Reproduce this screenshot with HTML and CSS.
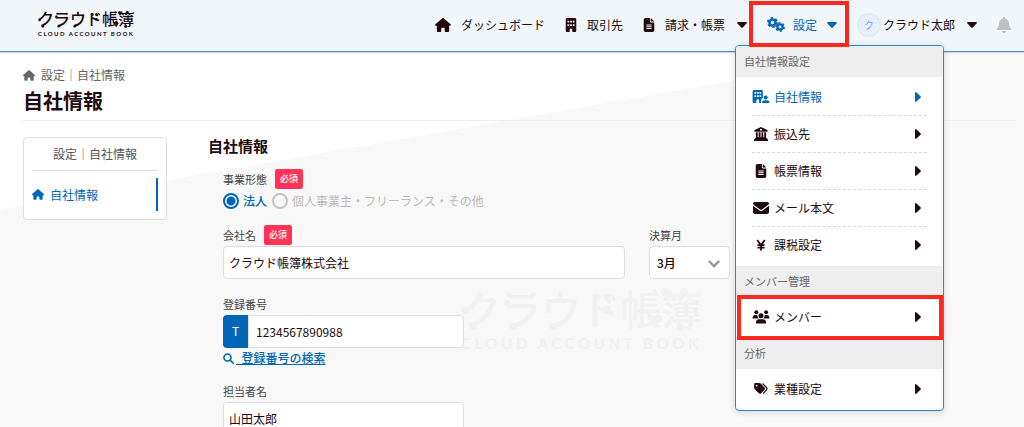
FILE: index.html
```html
<!DOCTYPE html>
<html lang="ja">
<head>
<meta charset="utf-8">
<title>自社情報</title>
<link rel="stylesheet" href="styles.css">
</head>
<body>
<svg class="sprite" aria-hidden="true">
  <symbol id="i-home" viewBox="0 0 576 512"><path d="M575.8 255.5c0 18-15 32.1-32 32.1h-32l.7 160.2c0 2.7-.2 5.4-.5 8.1V472c0 22.1-17.9 40-40 40H392c-22.1 0-40-17.9-40-40V384c0-17.7-14.3-32-32-32H256c-17.7 0-32 14.3-32 32v88c0 22.1-17.9 40-40 40H104c-22.1 0-40-17.9-40-40V287.6H32c-18 0-32-14-32-32.1c0-9 3-17 10-24L266.4 8c7-7 15-8 22-8s15 2 21 7L564.8 231.5c8 7 12 15 11 24z"/></symbol>
  <symbol id="i-building" viewBox="0 0 384 512"><path fill-rule="evenodd" d="M48 0C21.500 0 0 21.500 0 48V464c0 26.500 21.500 48 48 48h96V432c0-26.500 21.500-48 48-48s48 21.500 48 48v80h96c26.500 0 48-21.500 48-48V48c0-26.500-21.500-48-48-48ZM64 96h64v64H64ZM160 96h64v64h-64ZM256 96h64v64h-64ZM64 224h64v64H64ZM160 224h64v64h-64ZM256 224h64v64h-64Z"/></symbol>
  <symbol id="i-file" viewBox="0 0 384 512"><path fill-rule="evenodd" d="M64 0C28.700 0 0 28.700 0 64V448c0 35.300 28.700 64 64 64H320c35.300 0 64-28.700 64-64V160H256c-17.700 0-32-14.300-32-32V0ZM256 0V128H384ZM96 240H288v32H96ZM96 304H288v32H96ZM96 368H288v32H96Z"/></symbol>
  <symbol id="i-caret" viewBox="0 0 10 6"><path d="M1 0H9Q10.500 .3 9.500 1.500L6 5.300Q5 6.300 4 5.300L.5 1.500Q-.5 .3 1 0Z"/></symbol>
  <symbol id="i-arrow" viewBox="0 0 6 10"><path d="M0 1Q.3-.5 1.500 .5L5.300 4Q6.300 5 5.300 6L1.500 9.500Q.3 10.500 0 9Z"/></symbol>
  <symbol id="i-gears" viewBox="0 0 18 15">
    <g fill="none" stroke="currentColor"><circle cx="5.500" cy="5.500" r="3" stroke-width="2.600"/><circle cx="5.500" cy="5.500" r="4.600" stroke-width="1.800" stroke-dasharray="2.400 2.417"/>
    <circle cx="13" cy="10" r="2.600" stroke-width="2.300"/><circle cx="13" cy="10" r="4.100" stroke-width="1.600" stroke-dasharray="2.100 2.194"/></g>
  </symbol>
  <symbol id="i-bell" viewBox="0 0 448 512"><path d="M224 0c-17.700 0-32 14.300-32 32V51.200C119 66 64 130.600 64 208v18.800c0 47-17.300 92.400-48.500 127.600l-7.400 8.300c-8.400 9.400-10.400 22.900-5.300 34.400S19.400 416 32 416H416c12.600 0 24-7.400 29.200-18.900s3.100-25-5.300-34.400l-7.400-8.300C401.300 319.200 384 273.900 384 226.800V208c0-77.400-55-142-128-156.800V32c0-17.700-14.300-32-32-32ZM288 448H160c0 35 29 64 64 64s64-29 64-64Z"/></symbol>
  <symbol id="i-company" viewBox="0 0 18 15"><path fill-rule="evenodd" d="M1.500 0H9.500Q11 0 11 1.500V8.500Q9 9.500 9 11V14H7V11.500Q7 10 5.500 10T4 11.500V14H1.500Q0 14 0 12.500V1.500Q0 0 1.500 0ZM2 2.200V4H3.800V2.200ZM4.700 2.200V4H6.500V2.200ZM7.400 2.200V4H9.200V2.200ZM2 5.700V7.500H3.800V5.700ZM4.700 5.700V7.500H6.500V5.700ZM7.400 5.700V7.500H9.200V5.700Z"/><circle cx="14" cy="8" r="2.200"/><path d="M10 14Q10 11 12.500 11H15.500Q18 11 18 14Z"/></symbol>
  <symbol id="i-bank" viewBox="0 0 16 15"><path fill-rule="evenodd" d="M8 0 15 3.300V5H1V3.300ZM8 1.800A1.100 1.100 0 1 0 8 4A1.100 1.100 0 1 0 8 1.800ZM2.500 5.500h2V11h1V5.500h2V11h1V5.500h2V11h1V5.500h2V11.500L15.500 13.500V15H.5V13.500L2.500 11.500Z"/></symbol>
  <symbol id="i-mail" viewBox="0 0 16 12"><path d="M1.500 0H14.500Q16 0 16 1.500 16 2.200 15.300 2.800L9 7.500Q8 8.200 7 7.500L.7 2.800Q0 2.200 0 1.500 0 0 1.500 0Z"/><path d="M0 3.800 6.500 8.600Q8 9.700 9.500 8.600L16 3.800V10Q16 12 14 12H2Q0 12 0 10Z"/></symbol>
  <symbol id="i-yen" viewBox="0 0 10 12"><path d="M1.200 1 5 6.300 8.800 1M5 6V11.500M1.500 6.200H8.500M1.500 8.700H8.500" fill="none" stroke="currentColor" stroke-width="1.800"/></symbol>
  <symbol id="i-users" viewBox="0 0 18 15"><circle cx="4" cy="2.400" r="2.100"/><circle cx="14.500" cy="2.400" r="2.100"/><circle cx="9" cy="6.200" r="2.700"/><path d="M0 9Q0 5.300 3 5.300H5Q5 8 6.500 9ZM18 9Q18 5.300 15 5.300H13Q13 8 11.500 9ZM3.500 14.500Q3.500 10 7 10H11Q14.500 10 14.500 14.500Z"/></symbol>
  <symbol id="i-tags" viewBox="0 0 16 14"><path fill-rule="evenodd" d="M0 1.500Q0 0 1.500 0H6Q7 0 7.700 .7L12.300 5.500Q13.300 6.600 12.300 7.700L8 12.300Q7 13.300 5.900 12.300L.7 7.200Q0 6.500 0 5.500ZM3 1.900A1.100 1.100 0 1 0 3 4.100A1.100 1.100 0 1 0 3 1.900Z"/><path d="M9.800 .6 14.600 5.500Q15.700 6.700 14.600 7.900L10.500 12.300" fill="none" stroke="currentColor" stroke-width="1.400"/></symbol>
  <symbol id="i-search" viewBox="0 0 12 12"><path d="M8 8 11.200 11.200M8.800 4.900A3.900 3.900 0 1 1 1 4.900A3.900 3.900 0 1 1 8.800 4.900Z" fill="none" stroke="currentColor" stroke-width="1.700" stroke-linecap="round"/></symbol>
  <symbol id="i-chevron" viewBox="0 0 12 8"><path d="M1.500 1.500 6 6.200 10.500 1.500" fill="none" stroke="currentColor" stroke-width="2.400" stroke-linecap="round"/></symbol>
  <symbol id="i-nodes" viewBox="0 0 240 44"><circle cx="4" cy="22" r="3.500"/><circle cx="12" cy="38" r="3.500"/><circle cx="46" cy="15" r="3.500"/><circle cx="48" cy="7" r="2.500"/><circle cx="72" cy="7" r="2.500"/><circle cx="52" cy="38" r="3.500"/><circle cx="92" cy="38" r="3.500"/><circle cx="136" cy="9" r="3.500"/><circle cx="146" cy="9" r="3.500"/><circle cx="146" cy="21" r="3.500"/><circle cx="194" cy="4" r="2.500"/><circle cx="204" cy="4" r="4"/><circle cx="223" cy="4" r="4"/><circle cx="197" cy="31" r="4"/><circle cx="219" cy="39" r="3.500"/><circle cx="238" cy="5" r="2"/></symbol>
</svg>

<header class="header">
  <a class="wordmark" href="#"><span class="wordmark-main">クラウド帳簿</span><span class="wordmark-sub">CLOUD ACCOUNT BOOK</span><svg class="wordmark-nodes"><use href="#i-nodes"/></svg></a>
  <nav class="nav">
    <a class="nav-item" href="#"><svg class="icon-home"><use href="#i-home"/></svg>ダッシュボード</a>
    <a class="nav-item" href="#"><svg class="icon-tall"><use href="#i-building"/></svg>取引先</a>
    <button class="nav-item" type="button"><svg class="icon-tall"><use href="#i-file"/></svg>請求・帳票<svg class="caret"><use href="#i-caret"/></svg></button>
    <div class="nav-group">
      <button class="nav-item nav-active" type="button"><svg class="icon-gears"><use href="#i-gears"/></svg>設定<svg class="caret"><use href="#i-caret"/></svg></button>
      <div class="menu">
        <h2 class="menu-head">自社情報設定</h2>
        <ul class="menu-list">
          <li><a class="menu-item menu-current" href="#"><svg class="icon-wide"><use href="#i-company"/></svg><span>自社情報</span><svg class="arrow"><use href="#i-arrow"/></svg></a></li>
          <li><a class="menu-item" href="#"><svg class="icon-wide"><use href="#i-bank"/></svg><span>振込先</span><svg class="arrow"><use href="#i-arrow"/></svg></a></li>
          <li><a class="menu-item" href="#"><svg class="icon-wide"><use href="#i-file"/></svg><span>帳票情報</span><svg class="arrow"><use href="#i-arrow"/></svg></a></li>
          <li><a class="menu-item" href="#"><svg class="icon-wide icon-low"><use href="#i-mail"/></svg><span>メール本文</span><svg class="arrow"><use href="#i-arrow"/></svg></a></li>
          <li><a class="menu-item" href="#"><svg class="icon-wide icon-low"><use href="#i-yen"/></svg><span>課税設定</span><svg class="arrow"><use href="#i-arrow"/></svg></a></li>
        </ul>
        <h2 class="menu-head">メンバー管理</h2>
        <ul class="menu-list menu-marked">
          <li><a class="menu-item" href="#"><svg class="icon-wide"><use href="#i-users"/></svg><span>メンバー</span><svg class="arrow"><use href="#i-arrow"/></svg></a></li>
        </ul>
        <h2 class="menu-head">分析</h2>
        <ul class="menu-list">
          <li><a class="menu-item" href="#"><svg class="icon-wide icon-low"><use href="#i-tags"/></svg><span>業種設定</span><svg class="arrow"><use href="#i-arrow"/></svg></a></li>
        </ul>
      </div>
    </div>
    <button class="nav-item nav-user" type="button"><span class="avatar">ク</span>クラウド太郎<svg class="caret"><use href="#i-caret"/></svg></button>
    <button class="nav-item nav-bell" type="button" aria-label="通知"><svg class="icon-bell"><use href="#i-bell"/></svg></button>
  </nav>
</header>

<main class="main">
  <div class="page-head">
    <a class="crumb" href="#"><svg class="icon-small"><use href="#i-home"/></svg>設定｜自社情報</a>
    <h1 class="page-title">自社情報</h1>
  </div>
  <div class="columns">
    <aside class="side">
      <p class="side-title">設定｜自社情報</p>
      <a class="side-link" href="#"><svg class="icon-small"><use href="#i-home"/></svg>自社情報</a>
    </aside>
    <section class="content">
      <div class="wordmark watermark" aria-hidden="true"><span class="wordmark-main">クラウド帳簿</span><span class="wordmark-sub">CLOUD ACCOUNT BOOK</span><svg class="wordmark-nodes"><use href="#i-nodes"/></svg></div>
      <h2 class="section-title">自社情報</h2>
      <form class="form">
        <fieldset class="field">
          <legend class="label">事業形態<span class="badge">必須</span></legend>
          <div class="radios">
            <label class="radio"><input type="radio" name="kind" checked>法人</label>
            <label class="radio radio-off"><input type="radio" name="kind" disabled>個人事業主・フリーランス・その他</label>
          </div>
        </fieldset>
        <div class="row">
          <div class="field field-long">
            <label class="label" for="company">会社名<span class="badge">必須</span></label>
            <input class="input" id="company" type="text" value="クラウド帳簿株式会社">
          </div>
          <div class="field">
            <label class="label" for="month">決算月</label>
            <div class="select-wrap"><select class="input select" id="month"><option>3月</option></select><svg class="chevron"><use href="#i-chevron"/></svg></div>
          </div>
        </div>
        <div class="field field-mid">
          <label class="label" for="number">登録番号</label>
          <div class="prefixed"><span class="prefix">T</span><input class="input" id="number" type="text" value="1234567890988"></div>
          <a class="search-link" href="#"><svg class="icon-search"><use href="#i-search"/></svg><span class="search-text">&nbsp;&nbsp;登録番号の検索</span></a>
        </div>
        <div class="field field-mid">
          <label class="label" for="person">担当者名</label>
          <input class="input" id="person" type="text" value="山田太郎">
        </div>
      </form>
    </section>
  </div>
</main>
</body>
</html>
```
FILE: styles.css
```css
* { box-sizing: border-box; margin: 0; padding: 0; }
body {
  height: 100vh;
  overflow: hidden;
  display: flex;
  flex-direction: column;
  font: 12px/18px "Noto Sans CJK JP", sans-serif;
  color: #200a0e;
  background: #f8f8f8;
}
a { color: inherit; text-decoration: none; }
button, input, select { font: inherit; color: inherit; border: 0; background: none; }
svg { fill: currentColor; flex: none; display: block; }
ul { list-style: none; }
.sprite { position: absolute; width: 0; height: 0; }

.header {
  position: relative;
  z-index: 2;
  flex: none;
  display: flex;
  align-items: center;
  justify-content: space-between;
  height: 52px;
  padding: 0 13px 2px 38px;
  background: #f1f6fa;
  border-bottom: 1px solid #4a94d0;
  box-shadow: 0 1px 1px #c3dcef;
}
.wordmark { position: relative; display: flex; flex-direction: column; font-size: 16px; }
.wordmark-main {
  padding-top: 0.08em;
  font-family: "Liberation Sans", "Noto Sans CJK JP", sans-serif;
  font-weight: 500;
  line-height: 1.02em;
  white-space: nowrap;
}
.wordmark-sub {
  font-family: Lato, sans-serif;
  font-size: 0.375em;
  font-weight: 700;
  line-height: 1.5em;
  letter-spacing: 0.24em;
  white-space: nowrap;
}
.wordmark-nodes { position: absolute; left: 0; top: 0; width: 6em; height: 1.1em; }
.watermark {
  position: absolute;
  left: 253px;
  top: 151px;
  z-index: -1;
  font-size: 40px;
  color: #f0f0f0;
}

.nav { display: flex; align-items: center; gap: 20px; }
.nav-item { display: flex; align-items: center; gap: 10px; height: 48px; white-space: nowrap; }
.nav-active { gap: 8px; color: #0067b8; }
.nav-user { gap: 2px; }
.nav-bell { color: #bfbfbf; }
.nav-group { position: relative; }
.nav-group::after {
  content: "";
  position: absolute;
  inset: 0 -12px 2px -18px;
  z-index: 2;
  border: 4px solid #ff2620;
}
.icon-home { width: 16px; height: 14px; }
.icon-tall { width: 12px; height: 14px; }
.icon-gears { width: 18px; height: 15px; }
.icon-bell { width: 14px; height: 16px; }
.icon-small { width: 12px; height: 11px; }
.icon-wide { width: 18px; height: 14px; }
.icon-low { height: 12px; }
.icon-search { width: 11px; height: 11px; }
.caret { width: 10px; height: 6px; margin-left: 2px; }
.nav-user .caret { margin-left: 10px; }
.avatar {
  width: 24px;
  height: 24px;
  border: 1px solid #d9e4f2;
  border-radius: 50%;
  background: #e6f0fd;
  color: #7ea4ee;
  font-size: 10px;
  line-height: 22px;
}

.menu {
  position: absolute;
  left: -32px;
  top: 44px;
  width: 209px;
  overflow: hidden;
  background: #fff;
  border: 1px solid #2f86c8;
  border-radius: 4px;
  box-shadow: 0 1px 6px rgba(0, 0, 0, 0.15);
}
.menu-head {
  padding: 0 8px;
  background: #eee;
  color: #666;
  font-size: 11px;
  font-weight: 400;
  line-height: 31px;
}
.menu-list { position: relative; padding: 2px 16px 3px; }
.menu-list li + li { border-top: 1px dashed #d8d8d8; }
.menu-item { display: flex; align-items: center; gap: 4px; height: 36px; }
.menu-current { color: #0067b8; }
.arrow { width: 6px; height: 10px; margin-left: auto; margin-right: 6px; }
.menu-marked::after {
  content: "";
  position: absolute;
  inset: -2px 0 -2px 1px;
  border: 4px solid #ff2620;
}

.main {
  flex: 1;
  padding: 14px 7px 0 23px;
  background: linear-gradient(170deg, #fff 155px, #f8f8f8 156px);
}
.page-head { padding-bottom: 2px; border-bottom: 1px solid #eee; }
.crumb { display: flex; align-items: center; gap: 6px; color: #666; }
.page-title { font-size: 20px; font-weight: 700; line-height: 34px; }
.columns { display: flex; align-items: flex-start; gap: 41px; padding-top: 16px; }
.side {
  flex: none;
  width: 144px;
  padding: 0 8px 8px;
  background: #fff;
  border: 1px solid #dedede;
  border-radius: 4px;
}
.side-title { color: #555; text-align: center; line-height: 32px; border-bottom: 1px solid #ddd; }
.side-link {
  display: flex;
  align-items: center;
  gap: 6px;
  height: 33px;
  margin-top: 7px;
  color: #0067b8;
  border-right: 2px solid #0067b8;
}

.content { position: relative; z-index: 0; flex: 1; }
.section-title { font-size: 15px; font-weight: 700; line-height: 18px; }
.form { display: flex; flex-direction: column; gap: 15px; padding: 14px 0 0 15px; }
.field { border: 0; }
.field-long { width: 402px; }
.field-mid { width: 241px; }
.row { display: flex; gap: 24px; }
.label { display: flex; align-items: center; gap: 8px; height: 20px; font-size: 11px; color: #444; }
.badge {
  padding: 0 5px;
  border-radius: 2px;
  background: #ff3355;
  color: #fff;
  font-size: 9px;
  font-weight: 500;
  line-height: 20px;
}
.radios { display: flex; gap: 5px; padding-top: 3px; }
.radio { display: flex; align-items: center; gap: 4px; color: #0067b8; font-weight: 500; }
.radio-off { color: #bbb; font-weight: 400; }
.radio input {
  appearance: none;
  width: 16px;
  height: 16px;
  border: 2px solid #0067b8;
  border-radius: 50%;
}
.radio input:checked { background: radial-gradient(circle, #0067b8 4px, #fff 5px); }
.radio-off input { border-color: #c4c4c4; }
.input {
  display: block;
  width: 100%;
  height: 33px;
  margin-top: 1px;
  padding: 0 5px;
  background: #fff;
  border: 1px solid #dedede;
  border-radius: 4px;
}
.select-wrap { position: relative; width: 81px; }
.select { appearance: none; padding: 0 7px; font-weight: 500; }
.chevron { position: absolute; right: 10px; top: 14px; width: 12px; height: 8px; color: #999; }
.prefixed { display: flex; height: 33px; margin-top: 1px; }
.prefixed .input { margin: 0; padding: 0 7px; border-radius: 0 4px 4px 0; }
.prefix {
  flex: none;
  width: 25px;
  border-radius: 4px 0 0 4px;
  background: #0067b8;
  color: #fff;
  text-align: center;
  line-height: 32px;
}
.search-link { display: flex; align-items: center; gap: 2px; margin-top: 2px; line-height: 16px; color: #0067b8; font-weight: 500; }
.search-text { text-decoration: underline; }
```
